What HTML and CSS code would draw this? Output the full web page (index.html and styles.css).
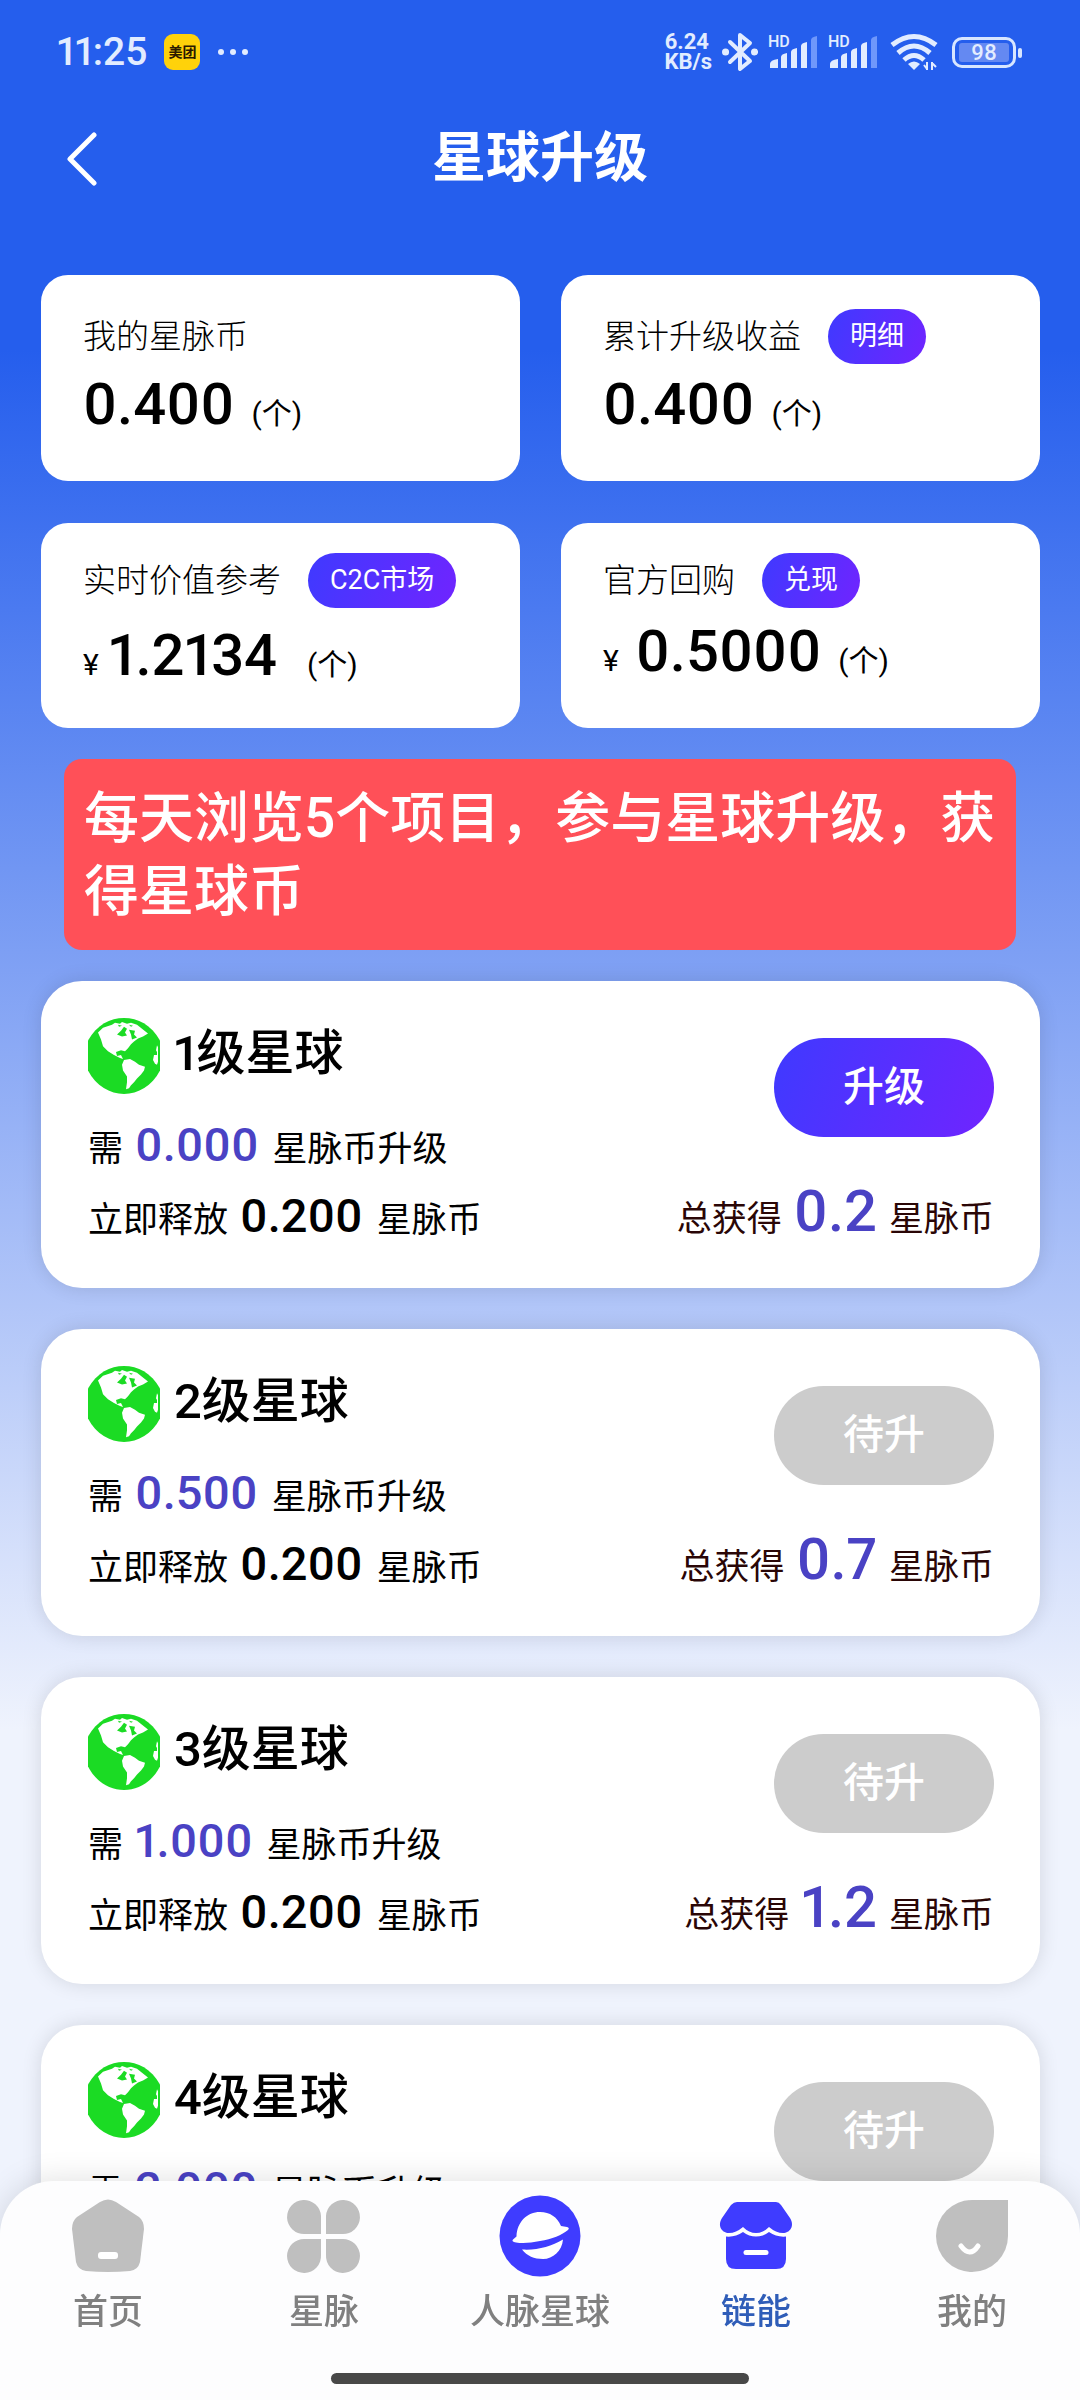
FILE: index.html
```html
<!DOCTYPE html>
<html lang="zh-CN">
<head>
<meta charset="utf-8">
<meta name="viewport" content="width=device-width, initial-scale=1">
<title>星球升级</title>
<link rel="stylesheet" href="styles.css">
</head>
<body>
<svg class="defs" aria-hidden="true">
  <symbol id="globe" viewBox="0 0 72 78" preserveAspectRatio="none">
    <path fill="#1bdb24" d="M36 0C50 0 63 7 72 23V54C64 70 50 78 36 78S8 70 0 54V23C9 7 22 0 36 0Z"/>
    <path fill="#fff" d="M10 15L15 10 24 7 27 5 32 6 34 4 39 6 43 5 49 7 54 11 60 16 55 19 50 21 46 24 43 27 40 31 37 34 33 33 28 35 29 39 33 38 35 42 32 41 26 38 20 34 15 29 13 22Z"/>
    <path fill="#1bdb24" d="M29 17L33 13 36 9 39 11 37 15 39 18 34 19ZM41 12L47 13 46 17 49 20 44 22 43 17ZM30 7L34 8 31 9ZM41 7L45 8 43 9Z"/>
    <path fill="#fff" d="M36 43L42 42 47 45 51 48 57 50 56 54 53 58 49 62 46 66 43 69 41 72 38 73 39 66 39 60 35 54 34 48Z"/>
    <path fill="#fff" d="M69 28L68 33 69 35V38H66L65 43 67 47 69 48 70 45V30Z"/>
  </symbol>
  <symbol id="signal" viewBox="0 0 50 34">
    <g fill="#e2ecff">
      <path d="M2 33v-4q0-4 8-5v9zM13 33V22q0-3 6-4v15zM23 33V17q0-3 6-4v20zM33 33V11q0-3 6-4v26z"/>
    </g>
    <path fill="#6f97fb" d="M43 33V5q0-3 6-4v32z"/>
  </symbol>
</svg>

<div class="screen">
  <div class="status">
    <span class="clock">11:25</span>
    <span class="app-badge">美团</span>
    <svg class="dots" viewBox="0 0 32 8" width="32" height="8" fill="#e2ecff" aria-hidden="true"><circle cx="4" cy="4" r="3"/><circle cx="16" cy="4" r="3"/><circle cx="28" cy="4" r="3"/></svg>
    <div class="status-right">
      <span class="speed">6.24<br>KB/s</span>
      <svg width="36" height="40" viewBox="0 0 36 40" fill="none" stroke="#e2ecff" stroke-width="4" stroke-linejoin="round" stroke-linecap="round" aria-hidden="true"><path d="M8 10L28 29 18 37V3L28 11 8 30"/><path d="M3.500 20h.1M32.500 20h.1" stroke-width="7"/></svg>
      <span class="sim"><span class="hd">HD</span><svg width="50" height="34"><use href="#signal"/></svg></span>
      <span class="sim"><span class="hd">HD</span><svg width="50" height="34"><use href="#signal"/></svg></span>
      <svg class="wifi" width="48" height="38" viewBox="0 0 48 38" fill="none" stroke="#e2ecff" aria-hidden="true"><path stroke-width="5" d="M2 12Q24-5 46 12M8 20Q24 6 40 20M14 27Q24 18 34 27"/><path d="M18 31Q24 26 30 31L24 37Z" fill="#e2ecff" stroke="none"/><path d="M37 29v8M34 32l3 4M42 37v-8M42 30l4 4" stroke-width="2"/></svg>
      <span class="battery"><span>98</span></span>
    </div>
  </div>

  <header class="topbar">
    <button class="back" type="button" aria-label="返回"><svg width="32" height="54" viewBox="0 0 32 54" fill="none" stroke="#fff" stroke-width="5" stroke-linecap="round" stroke-linejoin="round"><path d="M28 3L4 27 28 51"/></svg></button>
    <h1>星球升级</h1>
  </header>

  <main>
    <section class="stats">
      <div class="stat">
        <div class="stat-head"><span class="label">我的星脉币</span></div>
        <p class="value"><b>0.400</b><span class="unit">(个)</span></p>
      </div>
      <div class="stat">
        <div class="stat-head"><span class="label">累计升级收益</span><button class="pill" type="button">明细</button></div>
        <p class="value"><b>0.400</b><span class="unit">(个)</span></p>
      </div>
      <div class="stat price">
        <div class="stat-head"><span class="label">实时价值参考</span><button class="pill" type="button">C2C市场</button></div>
        <p class="value market"><span class="unit">¥</span><b>1.2134</b><span class="unit">(个)</span></p>
      </div>
      <div class="stat price">
        <div class="stat-head"><span class="label">官方回购</span><button class="pill" type="button">兑现</button></div>
        <p class="value"><span class="unit">¥</span><b>0.5000</b><span class="unit">(个)</span></p>
      </div>
    </section>

    <p class="notice">每天浏览5个项目，参与星球升级，获得星球币</p>

    <section class="levels">
      <article class="level">
        <div class="info">
          <h2><svg width="72" height="76" aria-hidden="true"><use href="#globe"/></svg>1级星球</h2>
          <p>需<b class="accent">0.000</b><span>星脉币升级</span></p>
          <p>立即释放<b>0.200</b><span>星脉币</span></p>
        </div>
        <div class="side">
          <button class="action" type="button">升级</button>
          <p class="total">总获得<b class="accent">0.2</b>星脉币</p>
        </div>
      </article>
      <article class="level">
        <div class="info">
          <h2><svg width="72" height="76" aria-hidden="true"><use href="#globe"/></svg>2级星球</h2>
          <p>需<b class="accent">0.500</b><span>星脉币升级</span></p>
          <p>立即释放<b>0.200</b><span>星脉币</span></p>
        </div>
        <div class="side">
          <button class="action" type="button" disabled>待升</button>
          <p class="total">总获得<b class="accent">0.7</b>星脉币</p>
        </div>
      </article>
      <article class="level">
        <div class="info">
          <h2><svg width="72" height="76" aria-hidden="true"><use href="#globe"/></svg>3级星球</h2>
          <p>需<b class="accent">1.000</b><span>星脉币升级</span></p>
          <p>立即释放<b>0.200</b><span>星脉币</span></p>
        </div>
        <div class="side">
          <button class="action" type="button" disabled>待升</button>
          <p class="total">总获得<b class="accent">1.2</b>星脉币</p>
        </div>
      </article>
      <article class="level">
        <div class="info">
          <h2><svg width="72" height="76" aria-hidden="true"><use href="#globe"/></svg>4级星球</h2>
          <p>需<b class="accent">2.000</b><span>星脉币升级</span></p>
        </div>
        <div class="side">
          <button class="action" type="button" disabled>待升</button>
        </div>
      </article>
    </section>
  </main>
</div>

<nav class="tabbar">
  <div class="tabs">
    <a href="#home"><svg width="82" height="82" viewBox="0 0 82 82" aria-hidden="true"><path fill="#bfbfbf" d="M33 7q8-5 16 0l23 15q5 4 5 12l-4 33q-2 8-10 9-22 2-44 0-8-1-10-9L5 34q0-8 5-12z"/><rect x="31" y="57" width="20" height="7" rx="3" fill="#fff"/></svg>首页</a>
    <a href="#pulse"><svg width="82" height="82" viewBox="0 0 82 82" fill="#bfbfbf" aria-hidden="true"><path d="M38 39H21.500A17 17 0 1 1 38 21zM43 39h16.500A17 17 0 1 0 43 21zM38 44H21.500A17 17 0 1 0 38 60zM43 44h16.500A17 17 0 1 1 43 60z"/></svg>星脉</a>
    <a href="#planet"><svg width="82" height="82" viewBox="-1 -1 82 82" aria-hidden="true"><circle cx="40" cy="40" r="40.500" fill="#3f3cff"/><path fill="#fff" d="M16.500 40.500C17 26 27 16 40 16c10 0 17 5 21 14l6 1q3 1 1 3C62 39 52 43 40 45q-14 3-24 1.500-5-1-3-3zM22 53.500c15 1 29-3 41-10C62 55 53 63 43 63c-9 0-16-3-21-9.500z"/></svg>人脉星球</a>
    <a class="active" href="#chain"><svg width="82" height="82" viewBox="0 0 82 82" fill="#3f3cff" aria-hidden="true"><path d="M22 7h39q3 0 5 3l9 13c5 8 0 15-7 15q-7 0-14-6-6 6-13 6t-13-6q-7 6-14 6c-7 0-12-7-7-15l9-13q3-3 6-3z"/><path d="M11 41.500q9 1 17-4.500 6 4.500 13 4.500T54 37q8 5.500 17 4.500V64q0 10-10 10H21q-10 0-10-10z"/><path d="M31 57.500h20" stroke="#fff" stroke-width="5" stroke-linecap="round"/></svg>链能</a>
    <a href="#me"><svg width="82" height="82" viewBox="0 0 82 82" aria-hidden="true"><path fill="#bfbfbf" d="M41 5h36v36A36 36 0 1 1 41 5z"/><path d="M30 51q9 12 17 0" fill="none" stroke="#fff" stroke-width="5" stroke-linecap="round"/></svg>我的</a>
  </div>
  <div class="home-bar"></div>
</nav>
</body>
</html>
```
FILE: styles.css
```css
* { box-sizing: border-box; margin: 0; }

body {
  font-family: Roboto, "Noto Sans CJK SC", sans-serif;
  font-variant-numeric: proportional-nums;
  color: #000;
  background: #eff3fd;
}

button { border: 0; padding: 0; font: inherit; color: #fff; background: none; }
svg { flex: none; }
.defs { position: absolute; width: 0; height: 0; }

.screen {
  height: 100vh;
  overflow-y: auto;
  scrollbar-width: none;
  background: linear-gradient(#255eed 350px, #eff3fd 1730px);
}

/* Phone status bar */
.status {
  display: flex;
  align-items: center;
  height: 106px;
  padding: 0 58px 2px 57px;
  color: #e2ecff;
}
.clock { font-size: 39px; font-weight: 500; line-height: 40px; }
.app-badge {
  width: 36px;
  height: 36px;
  margin-left: 17px;
  border-radius: 9px;
  background: #ffd20a;
  color: #2a1a00;
  font-size: 14px;
  font-weight: 700;
  line-height: 36px;
  text-align: center;
}
.dots { margin-left: 17px; }
.status-right { display: flex; align-items: center; gap: 10px; margin-left: auto; }
.speed { font-size: 22px; font-weight: 700; line-height: 20px; }
.sim { position: relative; display: flex; }
.hd { position: absolute; left: 0; top: 0; font-size: 16px; line-height: 14px; font-weight: 500; }
.wifi { margin-left: 2px; }
.battery {
  position: relative;
  width: 64px;
  height: 31px;
  margin: 0 6px 0 4px;
  padding: 3px 4px;
  border: 3px solid #d8e6ff;
  border-radius: 10px;
}
.battery span {
  display: block;
  border-radius: 3px;
  background: #6489f2;
  font-size: 22px;
  font-weight: 500;
  line-height: 19px;
  text-align: center;
}
.battery::after {
  content: "";
  position: absolute;
  right: -9px;
  top: 8px;
  width: 4px;
  height: 10px;
  border-radius: 2px;
  background: #d8e6ff;
}

/* Title bar */
.topbar {
  display: grid;
  grid-template-columns: 120px 1fr 120px;
  align-items: center;
  height: 106px;
}
.back { display: flex; padding-left: 66px; }
h1 { color: #fff; font-size: 54px; font-weight: 700; line-height: 80px; text-align: center; }

main { padding: 63px 40px 240px 41px; }

/* Balance cards */
.stats { display: grid; grid-template-columns: 1fr 1fr; gap: 42px 41px; }
.stat { min-height: 206px; padding: 34px 42px 0; border-radius: 27px; background: #fff; }
.stat-head { display: flex; align-items: center; gap: 27px; height: 55px; }
.label { font-size: 33px; font-weight: 300; line-height: 48px; }
.pill {
  height: 55px;
  padding: 0 22px;
  border-radius: 28px;
  background: linear-gradient(110deg, #3f3aff, #7024ff);
  font-size: 27px;
  line-height: 55px;
}
.value { display: flex; align-items: baseline; gap: 17px; line-height: 80px; }
.value b { font-size: 58px; font-weight: 500; }
.unit { font-size: 30px; }
.price { min-height: 205px; padding-top: 30px; }
.price .value { padding-top: 3px; }
.price .market { gap: 10px; padding-top: 7px; }
.market .unit:last-child { margin-left: 20px; }

/* Notice */
.notice {
  margin: 31px 24px 31px 23px;
  padding: 23px 16px 22px 20px;
  border-radius: 18px;
  background: #ff5058;
  color: #fff;
  font-size: 55px;
  font-weight: 500;
  line-height: 73px;
}

/* Level cards */
.levels { display: grid; gap: 41px; }
.level {
  display: flex;
  justify-content: space-between;
  min-height: 307px;
  padding: 37px 46px 37px 47px;
  border-radius: 41px;
  background: #fff;
  box-shadow: 0 0 20px rgba(0, 0, 0, .12);
}
.info h2 {
  display: flex;
  gap: 14px;
  height: 76px;
  margin-bottom: 15px;
  font-size: 49px;
  font-weight: 500;
  line-height: 72px;
}
.level p {
  display: flex;
  align-items: baseline;
  gap: 12px;
  height: 71px;
  font-size: 35px;
  line-height: 71px;
}
.level p span { margin-left: 2px; }
.level b { font-size: 47px; font-weight: 500; }
.level .accent { color: #4a42c4; }
.side { display: flex; flex-direction: column; align-items: flex-end; padding-top: 20px; }
.action {
  width: 220px;
  height: 99px;
  border-radius: 50px;
  background: linear-gradient(110deg, #3f3aff, #7024ff);
  font-size: 41px;
  font-weight: 500;
  line-height: 99px;
}
.action:disabled { background: #ccc; }
.level .total { height: 75px; margin-top: auto; color: #2a0606; }
.level .total b { font-size: 58px; }

/* Bottom tabs */
.tabbar {
  position: fixed;
  inset: auto 0 0;
  padding: 14px 0 16px;
  border-radius: 54px 54px 0 0;
  background: #fdfdfe;
  box-shadow: 0 0 32px rgba(0, 0, 0, .13);
}
.tabs { display: grid; grid-template-columns: repeat(5, 1fr); }
.tabs a {
  display: flex;
  flex-direction: column;
  align-items: center;
  gap: 10px;
  color: #808080;
  font-size: 35px;
  font-weight: 500;
  line-height: 52px;
  text-decoration: none;
}
.tabs .active { color: #2f5db8; }
.home-bar {
  width: 418px;
  height: 11px;
  margin: 34px auto 0;
  border-radius: 6px;
  background: #484848;
}
```
